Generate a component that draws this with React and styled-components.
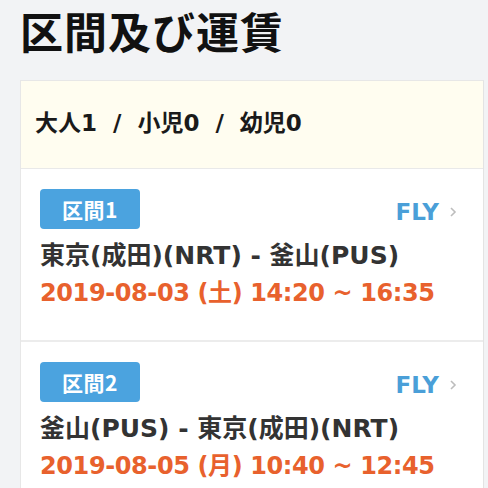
import styled, { createGlobalStyle } from "styled-components";

const GlobalStyle = createGlobalStyle`
    body {
        margin: 0;
        background: #f2f3f5;
        font-family: "DejaVu Sans", "Noto Sans CJK JP", sans-serif;
        color: #222;
    }
`

const segments = [
    { label: "区間1", route: "東京(成田)(NRT) - 釜山(PUS)", time: "2019-08-03 (土) 14:20 ~ 16:35" },
    { label: "区間2", route: "釜山(PUS) - 東京(成田)(NRT)", time: "2019-08-05 (月) 10:40 ~ 12:45" },
]

const App = () => {
    return (
        <Page>
            <GlobalStyle />
            <Title>区間及び運賃</Title>
            <Panel>
                <Passengers>大人1 / 小児0 / 幼児0</Passengers>
                {segments.map((seg, index) => {
                    return (
                        <Segment key={index}>
                            <TopRow>
                                <Badge>{seg.label}</Badge>
                                <Carrier>
                                    FLY
                                    <svg width="8" height="12" viewBox="0 0 8 12">
                                        <path d="M2 2 L6 6 L2 10" fill="none" stroke="#bdbdbd" strokeWidth="1.6" />
                                    </svg>
                                </Carrier>
                            </TopRow>
                            <Route>{seg.route}</Route>
                            <Time>{seg.time}</Time>
                        </Segment>
                    )
                })}
            </Panel>
        </Page>
    )
}

export default App

const Page = styled.main`
    padding: 0 4px 0 20px;
`

const Title = styled.h1`
    margin: 0;
    padding-top: 4px;
    font-family: "Noto Sans CJK JP", sans-serif;
    font-size: 43px;
    font-weight: 700;
    line-height: 52px;
    letter-spacing: 1px;
    color: #111;
`

const Panel = styled.section`
    margin-top: 24px;
    border: 1px solid #e7e7e7;
    border-right-color: #e3e3e3;
`

const Passengers = styled.div`
    background: #fffdf0;
    height: 88px;
    display: flex;
    align-items: center;
    padding: 0 0 8px 14px;
    box-sizing: border-box;
    font-size: 23px;
    font-weight: 700;
    word-spacing: 8px;
    color: #1a1a1a;
    border-bottom: 1px solid #e9e9e9;
`

const Segment = styled.div`
    background: #fff;
    padding: 20px 26px 28px 19px;
    border-bottom: 2px solid #ececec;
`

const TopRow = styled.div`
    display: flex;
    justify-content: space-between;
    align-items: center;
`

const Badge = styled.span`
    width: 100px;
    height: 40px;
    border-radius: 4px;
    background: #4ba3df;
    color: #fff;
    font-family: "Noto Sans CJK JP", sans-serif;
    font-size: 21px;
    font-weight: 700;
    display: flex;
    align-items: center;
    justify-content: center;
    letter-spacing: 0.5px;
`

const Carrier = styled.div`
    display: flex;
    align-items: center;
    gap: 10px;
    margin-top: 6px;
    color: #4a9fd8;
    font-size: 23px;
    font-weight: 700;
`

const Route = styled.div`
    margin-top: 9px;
    font-size: 25px;
    font-weight: 700;
    line-height: 36px;
    color: #333;
`

const Time = styled.div`
    font-size: 24px;
    font-weight: 700;
    line-height: 38px;
    letter-spacing: -0.4px;
    color: #e8612d;
`
